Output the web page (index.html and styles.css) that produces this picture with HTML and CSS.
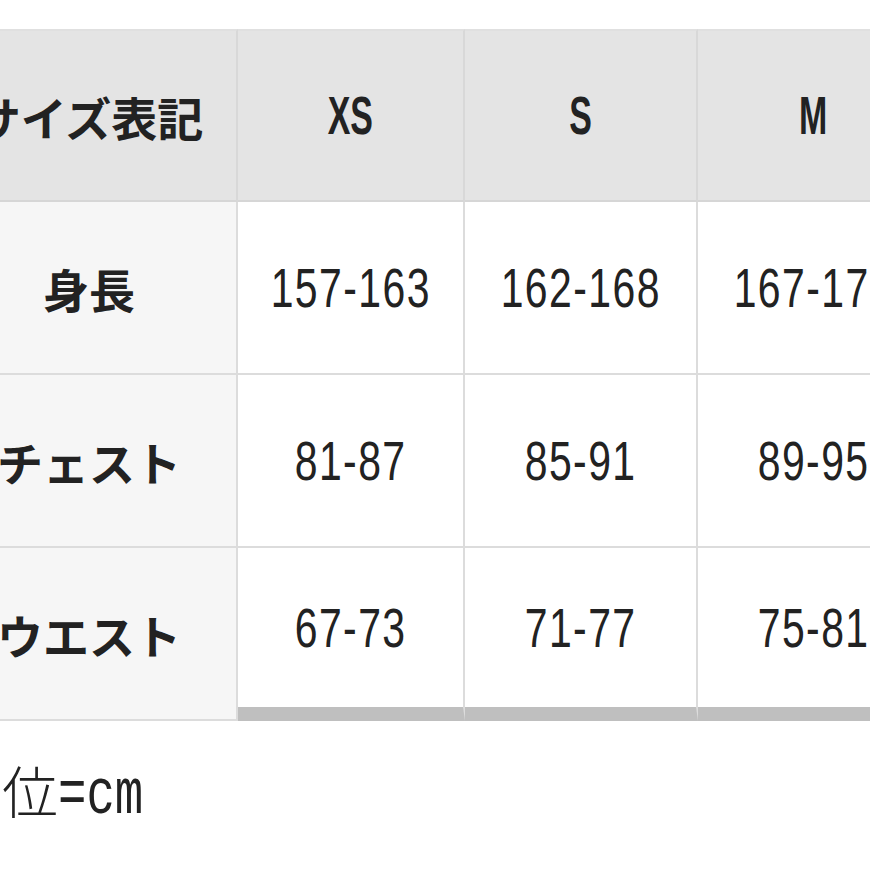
FILE: index.html
```html
<!DOCTYPE html>
<html lang="ja">
<head>
<meta charset="utf-8">
<title>サイズ表</title>
<link rel="stylesheet" href="styles.css">
</head>
<body>
<div class="wrap">
  <table class="size-table">
    <thead>
      <tr>
        <th class="label">サイズ表記</th>
        <th class="col-xs"><span class="size">XS</span></th>
        <th class="col-s"><span class="size">S</span></th>
        <th class="col-m"><span class="size">M</span></th>
      </tr>
    </thead>
    <tbody>
      <tr>
        <th class="label">身長</th>
        <td><span class="num">157-163</span></td>
        <td><span class="num">162-168</span></td>
        <td><span class="num">167-173</span></td>
      </tr>
      <tr>
        <th class="label">チェスト</th>
        <td><span class="num">81-87</span></td>
        <td><span class="num">85-91</span></td>
        <td><span class="num">89-95</span></td>
      </tr>
      <tr class="last">
        <th class="label">ウエスト</th>
        <td><span class="num">67-73</span></td>
        <td><span class="num">71-77</span></td>
        <td><span class="num">75-81</span></td>
      </tr>
    </tbody>
  </table>
  <p class="note">単位<span class="unit">=cm</span></p>
</div>
</body>
</html>
```

FILE: styles.css
```css
html, body {
  margin: 0;
  padding: 0;
  background: #ffffff;
  overflow: hidden;
}
body {
  width: 870px;
  height: 870px;
  color: #222222;
  font-family: "Liberation Sans", "Noto Sans CJK JP", sans-serif;
}
.wrap {
  margin-left: -58px;
  padding-top: 29px;
  width: 1000px;
}
.size-table {
  border-collapse: separate;
  border-spacing: 0;
  table-layout: fixed;
  width: 989px;
}
.size-table th,
.size-table td {
  box-sizing: border-box;
  height: 173px;
  padding: 0;
  text-align: center;
  vertical-align: middle;
  border-right: 2px solid #dcdcdc;
  border-bottom: 2px solid #dcdcdc;
  white-space: nowrap;
  overflow: hidden;
}
.size-table thead th {
  background: #e4e4e4;
  border-top: 2px solid #e0e0e0;
  border-right-color: #d8d8d8;
  border-bottom-color: #d6d6d6;
}
.size-table th.label {
  width: 296px;
  font-family: "Noto Sans CJK JP", sans-serif;
  font-weight: 700;
  font-size: 46px;
  letter-spacing: 0;
}
.size-table tbody th.label {
  background: #f6f6f6;
}
.col-xs { width: 227px; }
.col-s { width: 233px; }
.col-m { width: 233px; }
.size-table td {
  background: #ffffff;
}
.size-table tr.last td {
  border-bottom: 14px solid #bfbfbf;
}
.size {
  display: inline-block;
  font-family: "Liberation Sans", sans-serif;
  font-weight: 700;
  font-size: 53px;
  transform: scaleX(0.64);
}
.num {
  display: inline-block;
  font-family: "Liberation Sans", sans-serif;
  font-weight: 400;
  font-size: 56px;
  letter-spacing: 2px;
  transform: scaleX(0.73);
}
.note {
  margin: 36px 0 0 4px;
  font-family: "Noto Sans CJK JP", sans-serif;
  font-weight: 300;
  font-size: 56px;
  line-height: 64px;
  white-space: nowrap;
}
.unit {
  display: inline-block;
  font-family: "Liberation Mono", monospace;
  font-weight: 400;
  font-size: 64px;
  transform: scaleX(0.74);
  transform-origin: left center;
}
```
